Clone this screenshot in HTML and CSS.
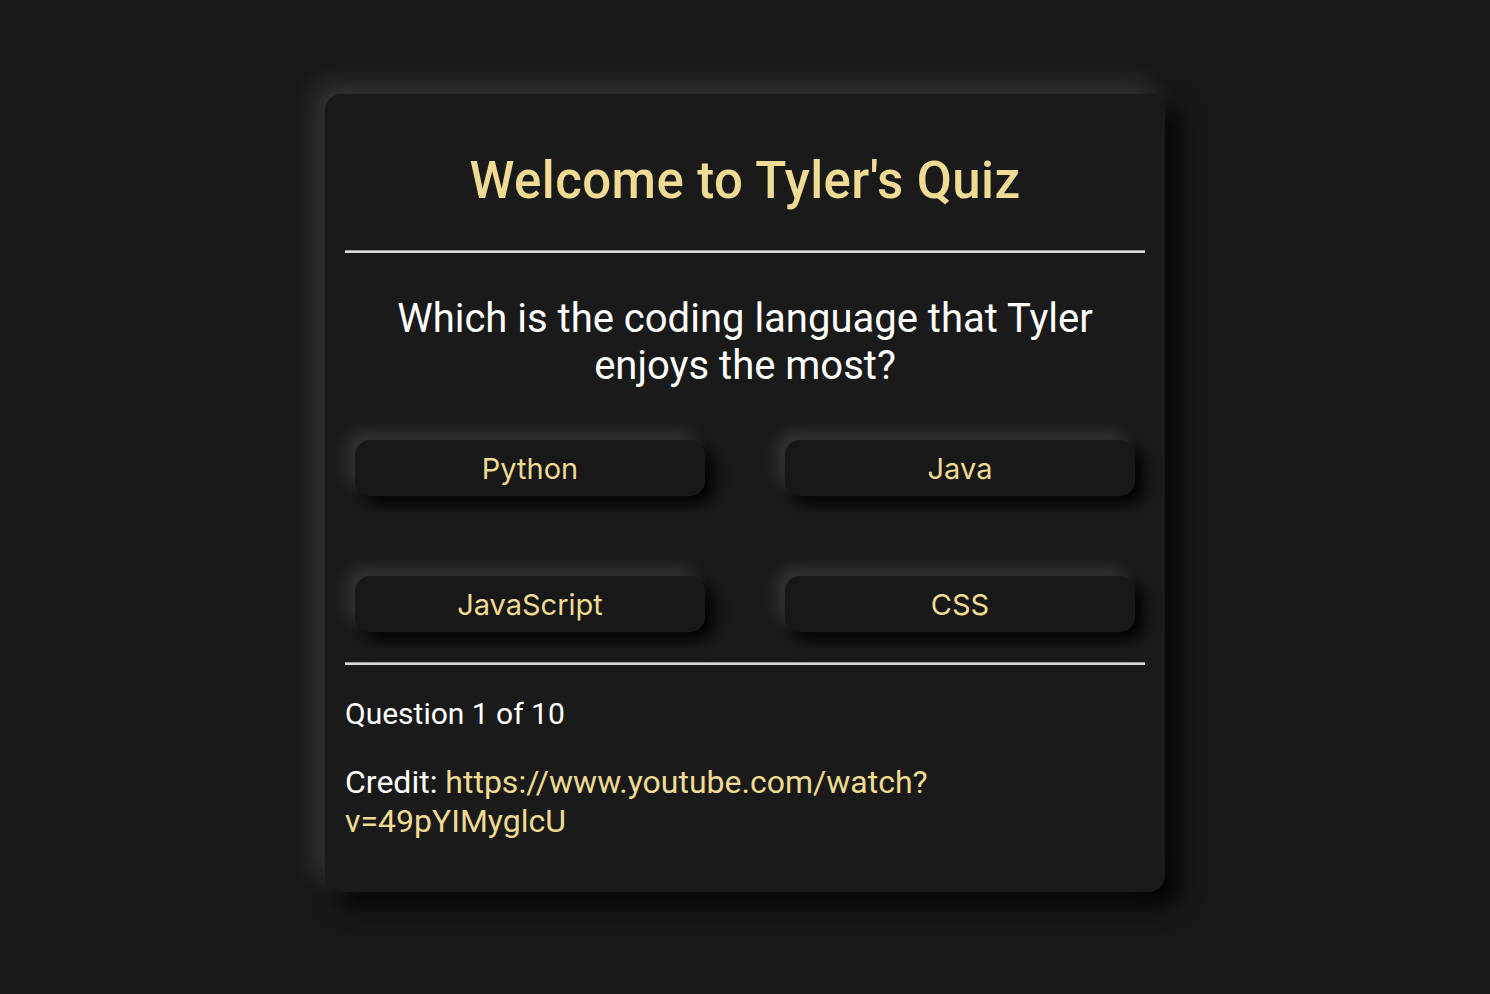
FILE: index.html
```html
<!DOCTYPE html>
<html lang="en">
<head>
<meta charset="utf-8">
<title>Tyler's Quiz</title>
<link rel="stylesheet" href="styles.css">
</head>
<body>
  <main class="card">
    <h1 class="title">Welcome to Tyler's Quiz</h1>
    <hr class="rule rule-top">
    <h2 class="question">Which is the coding language that Tyler enjoys the most?</h2>
    <div class="answers">
      <button class="answer">Python</button>
      <button class="answer">Java</button>
      <button class="answer">JavaScript</button>
      <button class="answer">CSS</button>
    </div>
    <hr class="rule rule-bottom">
    <p class="progress">Question 1 of 10</p>
    <p class="credit">Credit: <a class="credit-link" href="#">https://www.youtube.com/watch?v=49pYIMyglcU</a></p>
  </main>
</body>
</html>
```
FILE: styles.css
```css
html, body {
  margin: 0;
  padding: 0;
}
body {
  background: #181818;
  min-height: 100vh;
  display: flex;
  justify-content: center;
  align-items: flex-start;
  font-family: Roboto, "Liberation Sans", sans-serif;
  color: #ffffff;
}
.card {
  margin-top: 94px;
  width: 840px;
  height: 798px;
  padding: 0 20px;
  box-sizing: border-box;
  background: #1a1a1a;
  border-radius: 16px;
  box-shadow: -10px -10px 28px rgba(255, 255, 255, 0.14), 12px 12px 24px #000;
  display: flow-root;
}
.title {
  margin: 57px 0 40px;
  font-size: 51px;
  font-weight: 500;
  text-align: center;
  color: #efdb93;
  letter-spacing: 0.4px;
}
.rule {
  margin: 0;
  border: 0;
  height: 3px;
  background: #d8d8d8;
  border-top: 1px solid #9d9d9d;
  box-sizing: border-box;
}
.question {
  margin: 42px 0 41px;
  font-size: 40px;
  font-weight: 400;
  text-align: center;
  line-height: 47px;
}
.answers {
  display: grid;
  grid-template-columns: 350px 350px;
  justify-content: space-between;
  row-gap: 80px;
  padding: 10px;
}
.answer {
  height: 56px;
  border: 0;
  border-radius: 15px;
  background: #181818;
  color: #efdb93;
  font-family: Inter, "Noto Sans", sans-serif;
  font-size: 29px;
  font-weight: 400;
  box-shadow: -8px -8px 16px rgba(255, 255, 255, 0.12), 8px 8px 16px #000;
  padding: 0;
}
.rule-bottom {
  margin-top: 20px;
}
.progress {
  margin: 32px 0 0;
  font-size: 30px;
  line-height: 34px;
}
.credit {
  margin: 32px 0 0;
  font-size: 32px;
  line-height: 39px;
}
.credit-link {
  color: #efdb93;
  text-decoration: none;
}
```
